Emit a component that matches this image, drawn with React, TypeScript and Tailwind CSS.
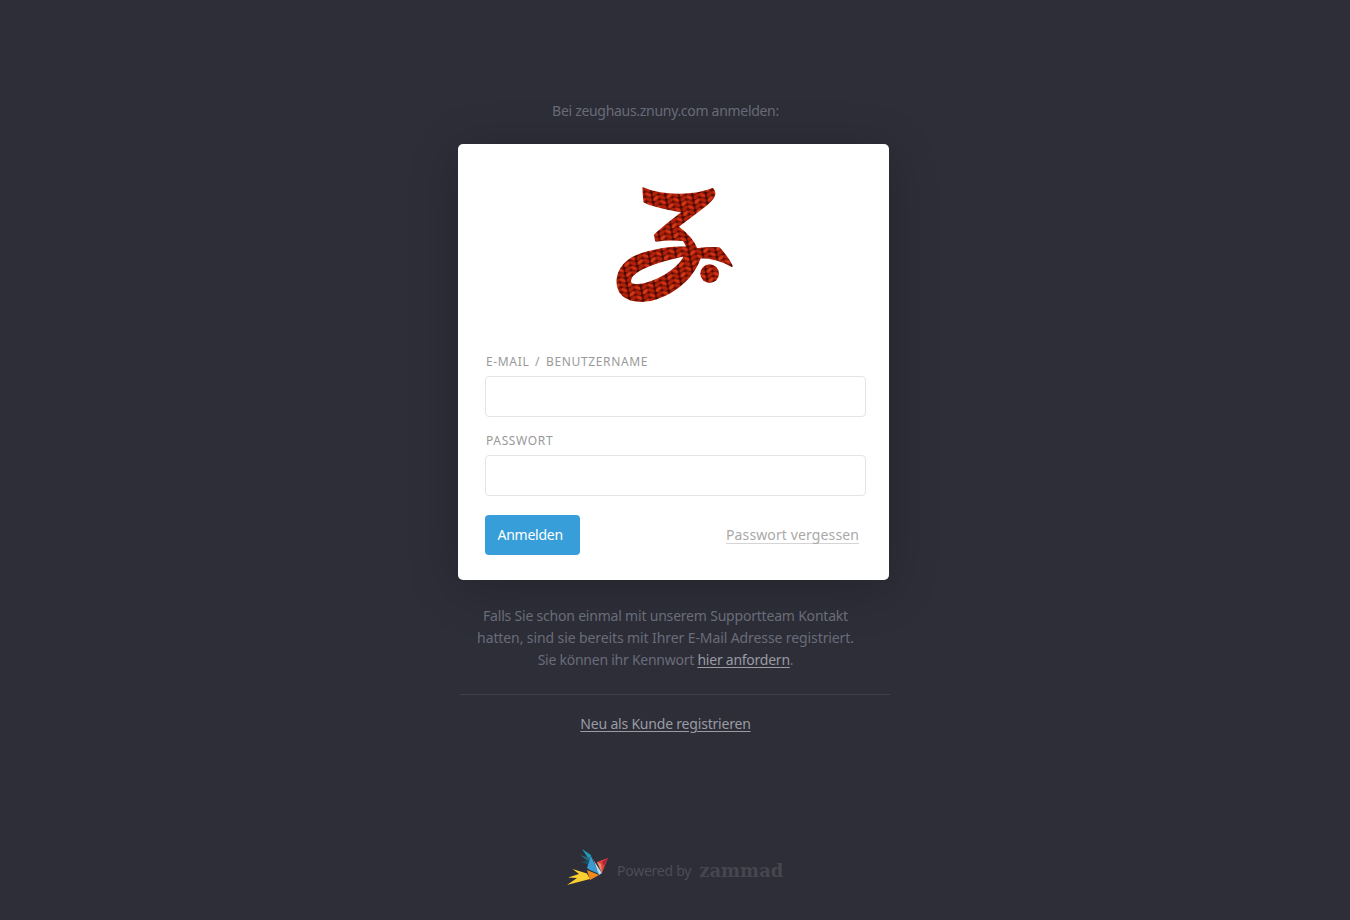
const font = { fontFamily: '"Noto Sans", "Liberation Sans", sans-serif' };

function KnitLogo() {
  return (
    <svg viewBox="0 0 450 435" className="block w-[150px] h-[145px]" aria-label="Logo">
      <defs>
        <pattern id="knit" width="40" height="30" patternUnits="userSpaceOnUse" patternTransform="rotate(-10)">
          <rect width="40" height="30" fill="#5e0d04" />
          <ellipse cx="10" cy="8" rx="11" ry="5.5" transform="rotate(32 10 8)" fill="#c9280c" />
          <ellipse cx="30" cy="8" rx="11" ry="5.5" transform="rotate(-32 30 8)" fill="#b3200a" />
          <ellipse cx="10" cy="23" rx="11" ry="5.5" transform="rotate(32 10 23)" fill="#b3200a" />
          <ellipse cx="30" cy="23" rx="11" ry="5.5" transform="rotate(-32 30 23)" fill="#d1300f" />
          <path d="M20 0 L20 30" stroke="#2e0502" strokeWidth="3" />
          <path d="M5 4 L14 10 M35 19 L26 25" stroke="#e24a22" strokeWidth="2" />
        </pattern>
      </defs>
      <path
        fillRule="evenodd"
        fill="url(#knit)"
        stroke="url(#knit)"
        strokeWidth="6"
        strokeLinejoin="round"
        d="M130 55 C185 80 285 80 338 57 C350 72 340 85 320 103 L232 170 C258 190 280 210 290 238 C315 234 340 233 358 235 C372 250 385 268 395 288 C365 270 330 262 300 262 C280 320 230 365 170 385 C130 400 80 395 60 365 C46 340 50 300 85 272 C120 245 200 232 262 232 C258 222 255 215 250 210 C225 208 195 208 168 212 L165 195 C190 170 225 145 250 125 C210 118 160 110 133 95 Z M90 332 C92 310 130 290 190 272 C215 265 240 258 256 256 C240 290 195 325 135 342 C108 348 88 345 90 332 Z"
      />
      <circle cx="329" cy="311" r="28" fill="url(#knit)" />
    </svg>
  );
}

function Bird() {
  return (
    <svg viewBox="0 0 57 45" className="block w-[57px] h-[45px]" aria-hidden="true">
      <polygon points="22,4 31,10 30,16" fill="#1f9ab5" />
      <polygon points="20,10 30,13 29,17" fill="#26697c" />
      <polygon points="21,17 29,15 29,20" fill="#1e4f5e" />
      <polygon points="31,11 27,23 30,25 39,29" fill="#3a9bd0" />
      <polygon points="32,11 34,16 42,28 39,30" fill="#b5dcec" />
      <polygon points="48,13 37,17 42,28" fill="#e0443e" />
      <polygon points="42,17 48,13 44,21" fill="#a8223a" />
      <polygon points="37,17 41,19 42,28" fill="#f28a6c" />
      <polygon points="27,25 39,30 30,35" fill="#f08a1d" />
      <polygon points="12.5,24 27,28.5 30,34 7,40 17,33 8,32.5 19,29" fill="#fbcf2f" />
    </svg>
  );
}

export default function App() {
  return (
    <div className="min-h-screen h-[920px] overflow-hidden bg-[#2d2e38] flex flex-col" style={font}>
      <div className="ml-[458px] w-[432px] pt-[100px] flex flex-col">
        <p className="pr-[17px] text-center text-[14px] leading-[22px] tracking-[-0.3px] text-[#6a6c79]">
          Bei zeughaus.znuny.com anmelden:
        </p>

        <div className="mt-[22px] w-[431px] h-[436px] bg-white rounded-[5px] shadow-[0_8px_50px_rgba(0,0,0,0.22)] px-[26px] flex flex-col">
          <div className="flex justify-center pt-[26px] h-[202px] pl-[3px]">
            <KnitLogo />
          </div>
          <label className="pl-[2px] mt-[8px] text-[12px] leading-[16px] tracking-[0.65px] [word-spacing:2px] uppercase text-[#999]">
            E-Mail / Benutzername
          </label>
          <input className="mt-[6px] ml-px h-[41px] w-[381px] rounded-[4px] border border-[#e4e4e4] bg-white" />
          <label className="pl-[2px] mt-[16px] text-[12px] leading-[16px] tracking-[0.65px] uppercase text-[#999]">
            Passwort
          </label>
          <input className="mt-[6px] ml-px h-[41px] w-[381px] rounded-[4px] border border-[#e4e4e4] bg-white" />
          <div className="mt-[18.5px] flex items-center justify-between pr-[4px]">
            <button className="ml-[0.5px] h-[40.5px] w-[95.5px] rounded-[4px] bg-[#389ed9] text-left pl-[13px] text-[14px] tracking-[-0.25px] text-white">
              Anmelden
            </button>
            <a className="text-[14px] tracking-[0.12px] text-[#a9a9a9] underline underline-offset-[3px] decoration-[#d5d5d5]">
              Passwort vergessen
            </a>
          </div>
        </div>

        <p className="mt-[25px] pr-[17px] text-center text-[14px] leading-[22px] text-[#6a6c79]">
          <span className="block tracking-[-0.2px]">Falls Sie schon einmal mit unserem Supportteam Kontakt</span>
          <span className="block tracking-[-0.1px]">hatten, sind sie bereits mit Ihrer E-Mail Adresse registriert.</span>
          <span className="block tracking-[-0.25px]">
            Sie können ihr Kennwort <a className="text-[#9a9ba3] underline underline-offset-2">hier anfordern</a>.
          </span>
        </p>
        <div className="mt-[23px] ml-[2px] border-t border-[#3f404a]" />
        <p className="mt-[18px] pr-[17px] text-center text-[14px] leading-[22px] tracking-[-0.2px]">
          <a className="text-[#9a9ba3] underline underline-offset-2">Neu als Kunde registrieren</a>
        </p>
      </div>

      <div className="mt-[110px] ml-[560px] flex items-center">
        <Bird />
        <span className="mt-[6px] text-[14px] tracking-[-0.25px] text-[#4b4c56]">Powered by</span>
        <span className="ml-[8px] mt-[6px] text-[18px] font-bold leading-none text-[#45464f]" style={{ fontFamily: '"DejaVu Serif", serif' }}>
          zammad
        </span>
      </div>
    </div>
  );
}
